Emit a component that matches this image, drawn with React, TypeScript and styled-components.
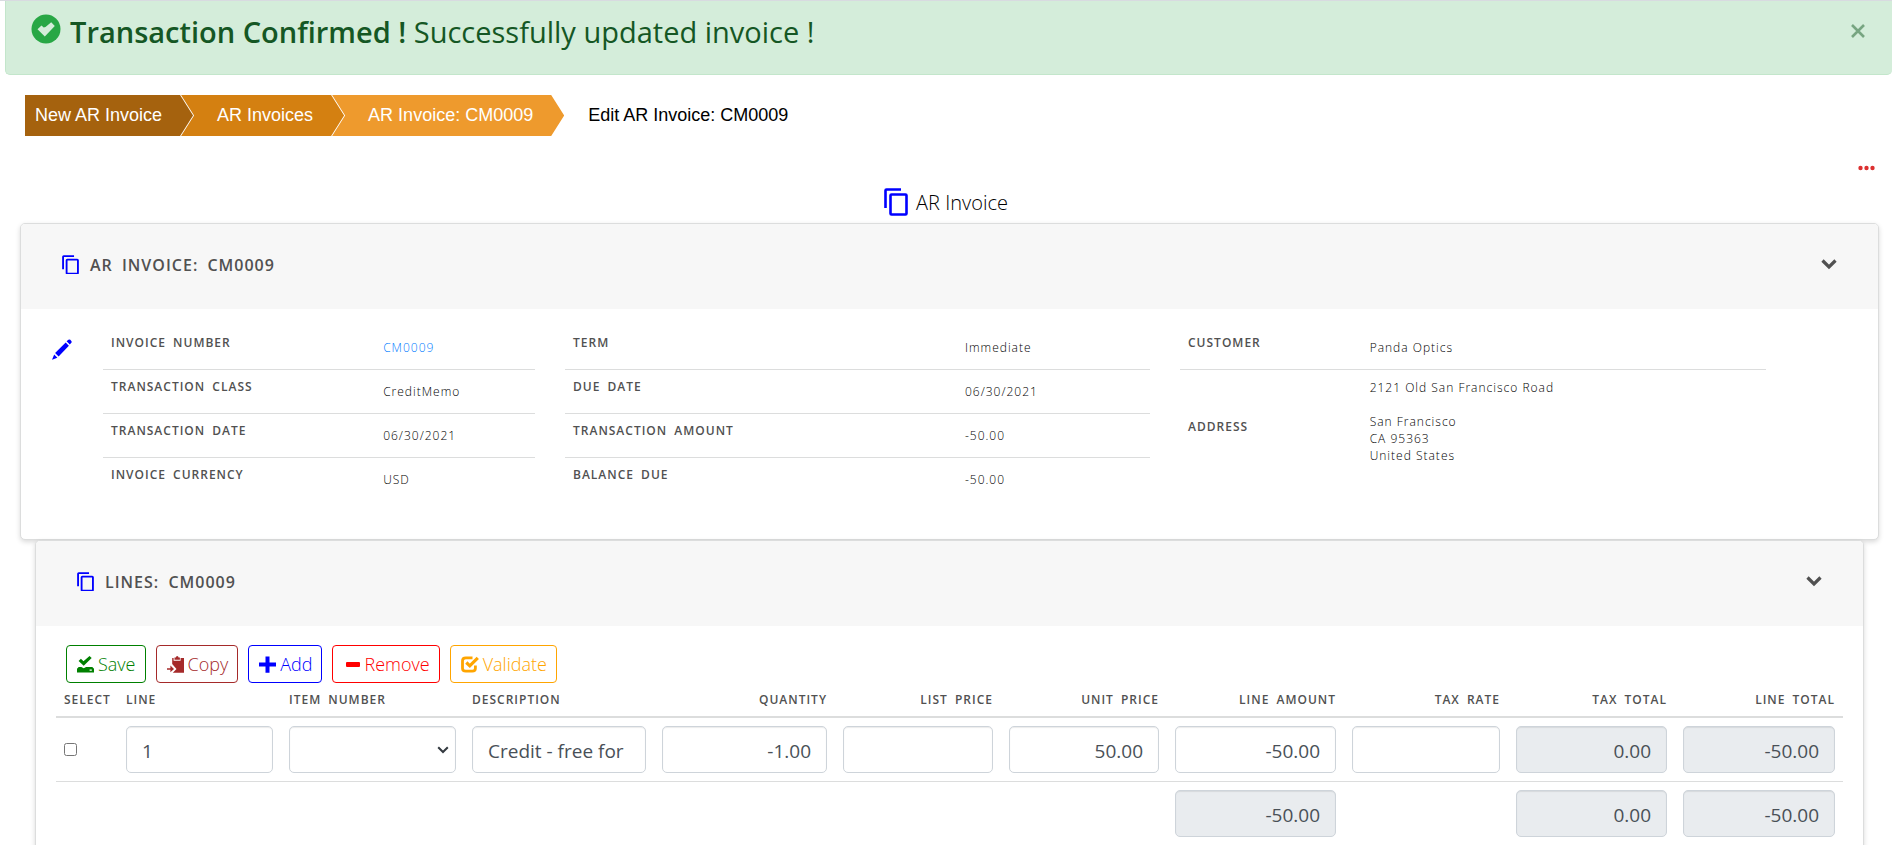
import React, { useState } from "react";
import styled, { createGlobalStyle } from "styled-components";

const ui = `"Open Sans", "Noto Sans", sans-serif`;

const GlobalStyle = createGlobalStyle`
  *, *::before, *::after { box-sizing: border-box; }
  body {
    margin: 0;
    background: #fff;
    color: #212529;
    font-family: ${ui};
    font-size: 16px;
    overflow-x: hidden;
  }
`;

const Page = styled.main`
  border-top: 1px solid #d8dbe0;
`;

/* ---------- alert ---------- */

const Alert = styled.div`
  display: flex;
  align-items: flex-start;
  height: 74px;
  margin-left: 5px;
  padding: 13px 27px 0 25px;
  border: 1px solid #c3e6cb;
  border-top: 0;
  border-right: 0;
  border-radius: 0 0 5px 5px;
  background: #d4edda;
  color: #155724;
  font-size: 29px;
  line-height: 36px;
`;

const AlertText = styled.p`
  flex: 1;
  margin: 0 0 0 9px;

  strong { font-weight: 600; }
`;

const IconButton = styled.button`
  display: inline-flex;
  padding: 0;
  border: 0;
  background: none;
  color: inherit;
  cursor: pointer;
`;

const CloseButton = styled(IconButton)`
  margin-top: 10px;
  color: #77a581;
`;

/* ---------- breadcrumbs ---------- */

const Crumbs = styled.nav`
  display: flex;
  margin: 20px 0 0 25px;
  font-family: "Liberation Sans", Arial, sans-serif;
  font-size: 18px;
  line-height: 41px;
`;

const Crumb = styled.a<{ $tone: string; $first?: boolean }>`
  margin-left: ${(p) => (p.$first ? 0 : -12)}px;
  padding: 0 31px 0 ${(p) => (p.$first ? 10 : 36)}px;
  background: ${(p) => p.$tone};
  color: #fff;
  text-decoration: none;
  white-space: nowrap;
  clip-path: polygon(
    0 0,
    calc(100% - 13px) 0,
    100% 50%,
    calc(100% - 13px) 100%,
    0 100%,
    ${(p) => (p.$first ? "0" : "13px")} 50%
  );
`;

const CurrentCrumb = styled.span`
  padding-left: 24px;
  color: #000;
`;

/* ---------- page heading ---------- */

const MenuRow = styled.div`
  display: flex;
  justify-content: flex-end;
  padding: 29px 17px 0 0;
  color: #dc3030;
`;

const Heading = styled.h1`
  display: flex;
  justify-content: center;
  align-items: center;
  gap: 8px;
  height: 42px;
  margin: 10px 0 0;
  color: #000;
  font-size: 20px;
  font-weight: 300;
`;

/* ---------- cards ---------- */

const Card = styled.section<{ $inset: number }>`
  margin: 0 ${(p) => p.$inset - 7}px 0 ${(p) => p.$inset}px;
  border: 1px solid #dcdddd;
  border-radius: 5px;
  box-shadow: 0 2px 5px rgba(0, 0, 0, 0.15);
  background: #fff;
`;

const CardHeader = styled.header`
  display: flex;
  align-items: center;
  gap: 11px;
  height: 85px;
  padding: 0 41px 4px;
  border-radius: 4px 4px 0 0;
  background: #f7f7f7;
  color: #515151;
`;

const CardTitle = styled.h2`
  flex: 1;
  margin: 0;
  font-size: 16px;
  font-weight: 600;
  letter-spacing: 1px;
  word-spacing: 4px;
`;

const Details = styled.div`
  display: grid;
  grid-template-columns: 31px 432fr 585fr 586fr;
  column-gap: 30px;
  min-height: 230px;
  padding: 17px 112px 38px 21px;
`;

const EditButton = styled(IconButton)`
  align-self: start;
  justify-content: flex-start;
  padding: 13px 0 0 10px;
  color: #00f;
`;

const FieldTable = styled.table<{ $labelWidth: string }>`
  align-self: start;
  width: 100%;
  border-collapse: collapse;
  table-layout: fixed;
  font-size: 12px;
  line-height: 17px;

  th {
    width: ${(p) => p.$labelWidth};
    padding: 8px;
    color: #515151;
    font-weight: 600;
    letter-spacing: 1px;
    word-spacing: 3px;
    text-align: left;
    vertical-align: top;
  }
  td {
    padding: 13px 8px;
    color: #000;
    font-weight: 300;
    letter-spacing: 1px;
    vertical-align: top;
  }
  tr + tr > * {
    border-top: 1px solid #dcdddd;
  }
  a {
    color: #007bff;
    text-decoration: none;
  }
`;

const AddressTable = styled(FieldTable)`
  tr + tr th { vertical-align: middle; }
  tr + tr td { padding: 9px 8px 18px; }
`;

/* ---------- lines ---------- */

const LinesBody = styled.div`
  padding: 19px 20px 20px;
`;

const Toolbar = styled.div`
  display: flex;
  gap: 10px;
  padding-left: 10px;
`;

const ToolButton = styled.button<{ $tone: string }>`
  display: inline-flex;
  align-items: center;
  gap: 5px;
  height: 38px;
  padding: 0 9px 0 10px;
  border: 1px solid ${(p) => p.$tone};
  border-radius: 4px;
  background: #fff;
  color: ${(p) => p.$tone};
  font: 300 18px ${ui};
  cursor: pointer;

  svg { margin-right: -1px; }
`;

const LinesTable = styled.table`
  width: 100%;
  border-collapse: collapse;
  table-layout: fixed;

  th {
    padding: 8px;
    color: #515151;
    font-size: 12px;
    font-weight: 600;
    line-height: 17px;
    letter-spacing: 1px;
    word-spacing: 3px;
    text-align: left;
    white-space: nowrap;
  }
  th.amount { text-align: right; }
  td { padding: 8px; }
  thead tr { border-bottom: 2px solid #dcdddd; }
  tbody tr { border-bottom: 1px solid #dcdddd; }
`;

const Col = styled.col<{ $w: number }>`
  width: ${(p) => p.$w}px;
`;

const Field = styled.input<{ $amount?: boolean }>`
  display: block;
  width: 100%;
  height: 47px;
  padding: 2px 15px 0;
  border: 1px solid #ced4da;
  border-radius: 5px;
  background: #fff;
  box-shadow: inset 0 1px 1px rgba(0, 0, 0, 0.08);
  color: #495057;
  font: 400 19px ${ui};
  text-align: ${(p) => (p.$amount ? "right" : "left")};

  &:read-only { background: #e9ecef; }
`;

const SelectBox = styled.div`
  display: grid;
  align-items: center;
  justify-items: end;

  > * { grid-area: 1 / 1; }
  > svg {
    margin-right: 7px;
    pointer-events: none;
  }
`;

const ItemSelect = styled.select`
  width: 100%;
  height: 47px;
  padding: 0 24px 0 15px;
  border: 1px solid #ced4da;
  border-radius: 5px;
  appearance: none;
  background: #fff;
  box-shadow: inset 0 1px 1px rgba(0, 0, 0, 0.08);
  color: #495057;
  font: 400 19px ${ui};
`;

const Tick = styled.input`
  display: block;
  width: 13px;
  height: 13px;
  margin: 0;
`;

/* ---------- icons ---------- */

const CheckCircle = () => (
  <svg width="30" height="30" viewBox="0 0 30 30" aria-hidden="true">
    <circle cx="15" cy="15" r="14.5" fill="#28a745" />
    <path d="M6.500 15.300l4-3.800 2.200 2.100 1.800-.6 5.700-4.800 3.600 3.800L13.800 22.500z" fill="#d4edda" />
  </svg>
);

const CopyIcon = ({ size, stroke }: { size: number; stroke: number }) => (
  <svg width={size} height={(size * 7) / 6} viewBox="0 0 24 28" fill="none" stroke="#00f" strokeWidth={stroke} aria-hidden="true">
    <path d="M1.500 20V2.500q0-1 1-1H17" />
    <rect x="6.500" y="6.500" width="16" height="20" rx="1" />
  </svg>
);

const PencilIcon = () => (
  <svg width="20" height="21" viewBox="0 0 20 21" fill="currentColor" aria-hidden="true">
    <path d="M16.400.8q1-.8 1.900 0l1 1.200q.8.900 0 1.800L17.800 5.400l-3.200-3.200zM13.700 3.400l3.200 3.400L6.600 17.600l-3.500-3.500zM2.200 15.500l3.200 3.300L0 20.800z" />
  </svg>
);

const ChevronIcon = () => (
  <svg width="16" height="12" viewBox="0 0 16 12" fill="none" stroke="#515151" strokeWidth="3.200" aria-hidden="true">
    <path d="M1.500 1.500L8 8l6.500-6.500" />
  </svg>
);

const SelectArrow = () => (
  <svg width="12" height="8" viewBox="0 0 12 8" fill="none" stroke="#343a40" strokeWidth="2" aria-hidden="true">
    <path d="M1.200 1.200L6 6l4.800-4.800" />
  </svg>
);

const SaveIcon = () => (
  <svg width="17" height="17" viewBox="0 0 17 17" fill="currentColor" aria-hidden="true">
    <path d="M1.600 5l2.300-2.200 2.600 2.400L12.500 0l2.200 2L6.700 9.800z" />
    <path d="M0 16.500v-3.700L1.700 11h2.600l2.400 1.300L9.100 11h6.200l1.700 1.800v3.700zM12.600 13.600v1.200h2.200v-1.200z" fillRule="evenodd" />
  </svg>
);

const PasteIcon = () => (
  <svg width="17" height="17" viewBox="0 0 17 17" fill="currentColor" aria-hidden="true">
    <path d="M5.200 2h1.400v2.800h7V2H17v14.800H5.800L9.500 13 5.200 8z" />
    <path d="M7.500 3.800V1.500h1.300Q9 0 10.200 0t1.400 1.500h1.300v2.300z" />
    <path d="M0 12.200h3.400V9.600L7 12.900l-3.600 3.300v-2.400H0z" />
  </svg>
);

const PlusIcon = () => (
  <svg width="17" height="17" viewBox="0 0 17 17" fill="currentColor" aria-hidden="true">
    <path d="M6.500 .500h4v6H17v4h-6.500v6.200h-4v-6.200H0v-4h6.500z" />
  </svg>
);

const MinusIcon = () => (
  <svg width="17" height="17" viewBox="0 0 17 17" fill="currentColor" aria-hidden="true">
    <rect x="3" y="6" width="14" height="5" rx="1" />
  </svg>
);

const ValidateIcon = () => (
  <svg width="18" height="17" viewBox="0 0 18 17" fill="none" stroke="currentColor" aria-hidden="true">
    <path d="M11.500 1.800H4.800q-3.300 0-3.300 3v7.400q0 3 3.300 3h6.400q3.200 0 3.200-3V9.500" strokeWidth="2.800" />
    <path d="M5.300 6.500l3.500 3.300 8-8" strokeWidth="3.200" />
  </svg>
);

const CloseIcon = () => (
  <svg width="14" height="14" viewBox="0 0 14 14" stroke="currentColor" strokeWidth="2.600" aria-hidden="true">
    <path d="M1 1l12 12M13 1L1 13" />
  </svg>
);

const DotsIcon = () => (
  <svg width="17" height="6" viewBox="0 0 17 6" fill="currentColor" aria-hidden="true">
    <circle cx="2.500" cy="3" r="2.200" />
    <circle cx="8.500" cy="3" r="2.200" />
    <circle cx="14.500" cy="3" r="2.200" />
  </svg>
);

/* ---------- data ---------- */

const crumbs = [
  { text: "New AR Invoice", tone: "#a5620e" },
  { text: "AR Invoices", tone: "#d48011" },
  { text: "AR Invoice: CM0009", tone: "#ee9a2d" },
];

const tools = [
  { text: "Save", tone: "green", icon: <SaveIcon /> },
  { text: "Copy", tone: "brown", icon: <PasteIcon /> },
  { text: "Add", tone: "blue", icon: <PlusIcon /> },
  { text: "Remove", tone: "red", icon: <MinusIcon /> },
  { text: "Validate", tone: "orange", icon: <ValidateIcon /> },
];

type Column = { name: string; width: number; amount?: boolean; value?: string; locked?: boolean; total?: string };

const columns: Column[] = [
  { name: "SELECT", width: 62 },
  { name: "LINE", width: 163, value: "1" },
  { name: "ITEM NUMBER", width: 183 },
  { name: "DESCRIPTION", width: 190, value: "Credit - free for" },
  { name: "QUANTITY", width: 181, amount: true, value: "-1.00" },
  { name: "LIST PRICE", width: 166, amount: true, value: "" },
  { name: "UNIT PRICE", width: 166, amount: true, value: "50.00" },
  { name: "LINE AMOUNT", width: 177, amount: true, value: "-50.00", total: "-50.00" },
  { name: "TAX RATE", width: 164, amount: true, value: "" },
  { name: "TAX TOTAL", width: 167, amount: true, value: "0.00", locked: true, total: "0.00" },
  { name: "LINE TOTAL", width: 168, amount: true, value: "-50.00", locked: true, total: "-50.00" },
];

const invoiceFields: [string, React.ReactNode][] = [
  ["INVOICE NUMBER", <a href="#invoice">CM0009</a>],
  ["TRANSACTION CLASS", "CreditMemo"],
  ["TRANSACTION DATE", "06/30/2021"],
  ["INVOICE CURRENCY", "USD"],
];

const termFields: [string, React.ReactNode][] = [
  ["TERM", "Immediate"],
  ["DUE DATE", "06/30/2021"],
  ["TRANSACTION AMOUNT", "-50.00"],
  ["BALANCE DUE", "-50.00"],
];

const Fields = ({ rows, labelWidth }: { rows: [string, React.ReactNode][]; labelWidth: string }) => (
  <FieldTable $labelWidth={labelWidth}>
    <tbody>
      {rows.map(([label, value]) => (
        <tr key={label}>
          <th scope="row">{label}</th>
          <td>{value}</td>
        </tr>
      ))}
    </tbody>
  </FieldTable>
);

const Panel = ({ title, inset, children }: { title: string; inset: number; children: React.ReactNode }) => {
  const [open, setOpen] = useState(true);
  return (
    <Card $inset={inset}>
      <CardHeader>
        <CopyIcon size={17} stroke={2.6} />
        <CardTitle>{title}</CardTitle>
        <IconButton type="button" aria-label="Toggle section" aria-expanded={open} onClick={() => setOpen(!open)}>
          <ChevronIcon />
        </IconButton>
      </CardHeader>
      {open && children}
    </Card>
  );
};

const LineCell = ({ column }: { column: Column }) => {
  if (column.name === "SELECT") return <Tick type="checkbox" aria-label="Select line" />;
  if (column.name === "ITEM NUMBER")
    return (
      <SelectBox>
        <ItemSelect aria-label="Item number">
          <option value="" />
        </ItemSelect>
        <SelectArrow />
      </SelectBox>
    );
  return <Field aria-label={column.name} $amount={column.amount} readOnly={column.locked} defaultValue={column.value} />;
};

export default function App() {
  const [confirmed, setConfirmed] = useState(true);
  return (
    <Page>
      <GlobalStyle />
      {confirmed && (
        <Alert role="alert">
          <CheckCircle />
          <AlertText>
            <strong>Transaction Confirmed !</strong> Successfully updated invoice !
          </AlertText>
          <CloseButton type="button" aria-label="Close" onClick={() => setConfirmed(false)}>
            <CloseIcon />
          </CloseButton>
        </Alert>
      )}

      <Crumbs aria-label="Breadcrumb">
        {crumbs.map((c, i) => (
          <Crumb key={c.text} href="#" $tone={c.tone} $first={i === 0}>
            {c.text}
          </Crumb>
        ))}
        <CurrentCrumb aria-current="page">Edit AR Invoice: CM0009</CurrentCrumb>
      </Crumbs>

      <MenuRow>
        <IconButton type="button" aria-label="More actions">
          <DotsIcon />
        </IconButton>
      </MenuRow>

      <Heading>
        <CopyIcon size={24} stroke={2.6} />
        AR Invoice
      </Heading>

      <Panel title="AR INVOICE: CM0009" inset={20}>
        <Details>
          <EditButton type="button" aria-label="Edit invoice">
            <PencilIcon />
          </EditButton>
          <Fields rows={invoiceFields} labelWidth="63%" />
          <Fields rows={termFields} labelWidth="67%" />
          <AddressTable $labelWidth="31%">
            <tbody>
              <tr>
                <th scope="row">CUSTOMER</th>
                <td>Panda Optics</td>
              </tr>
              <tr>
                <th scope="row">ADDRESS</th>
                <td>
                  2121 Old San Francisco Road
                  <br />
                  <br />
                  San Francisco
                  <br />
                  CA 95363
                  <br />
                  United States
                </td>
              </tr>
            </tbody>
          </AddressTable>
        </Details>
      </Panel>

      <Panel title="LINES: CM0009" inset={35}>
        <LinesBody>
          <Toolbar>
            {tools.map((t) => (
              <ToolButton key={t.text} type="button" $tone={t.tone}>
                {t.icon}
                {t.text}
              </ToolButton>
            ))}
          </Toolbar>
          <LinesTable>
            <colgroup>
              {columns.map((c) => (
                <Col key={c.name} $w={c.width} />
              ))}
            </colgroup>
            <thead>
              <tr>
                {columns.map((c) => (
                  <th key={c.name} scope="col" className={c.amount ? "amount" : undefined}>
                    {c.name}
                  </th>
                ))}
              </tr>
            </thead>
            <tbody>
              <tr>
                {columns.map((c) => (
                  <td key={c.name}>
                    <LineCell column={c} />
                  </td>
                ))}
              </tr>
            </tbody>
            <tfoot>
              <tr>
                {columns.map((c) => (
                  <td key={c.name}>
                    {c.total && <Field aria-label={`Total ${c.name}`} $amount readOnly defaultValue={c.total} />}
                  </td>
                ))}
              </tr>
            </tfoot>
          </LinesTable>
        </LinesBody>
      </Panel>
    </Page>
  );
}
